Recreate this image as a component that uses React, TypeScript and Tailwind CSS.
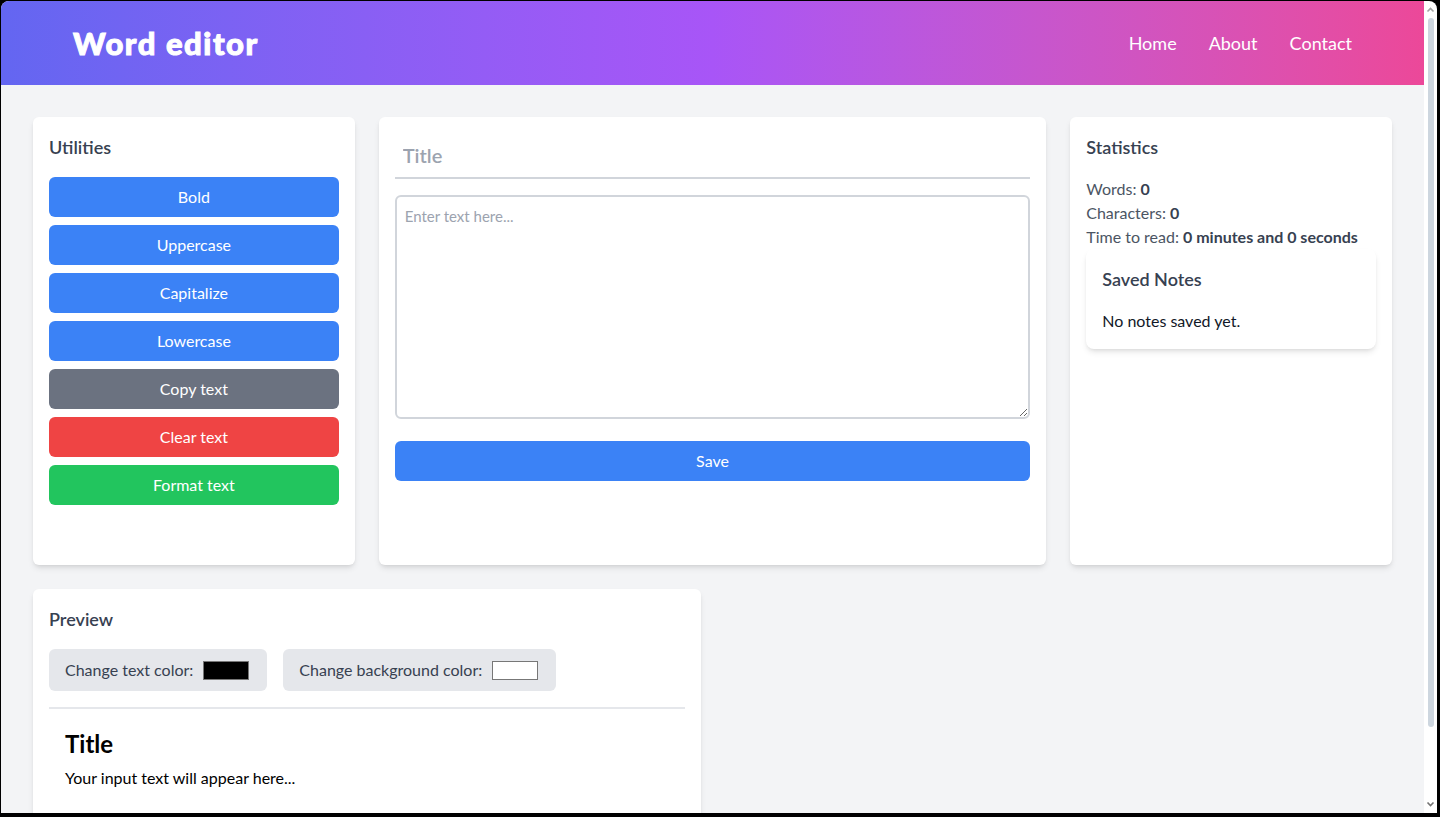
import { useState } from 'react'

const utilities = [
  { label: 'Bold', color: 'bg-[#3b82f6]' },
  { label: 'Uppercase', color: 'bg-[#3b82f6]' },
  { label: 'Capitalize', color: 'bg-[#3b82f6]' },
  { label: 'Lowercase', color: 'bg-[#3b82f6]' },
  { label: 'Copy text', color: 'bg-[#6b7280]' },
  { label: 'Clear text', color: 'bg-[#ef4444]' },
  { label: 'Format text', color: 'bg-[#22c55e]' },
]

function ScrollBar() {
  return (
    <div className="flex w-[13px] flex-col items-center bg-white py-1">
      <svg width="9" height="8" viewBox="0 0 9 8" className="mt-[1px]">
        <polyline points="1.5,5.5 4.5,2.5 7.5,5.5" fill="none" stroke="#a3a3a3" strokeWidth="1.6" />
      </svg>
      <div className="mt-[4px] h-[709px] w-[6px] rounded-full bg-[#cdd6df]" />
      <div className="flex-1" />
      <svg width="9" height="8" viewBox="0 0 9 8" className="mb-[1px]">
        <polyline points="1.5,2.5 4.5,5.5 7.5,2.5" fill="none" stroke="#737373" strokeWidth="1.6" />
      </svg>
    </div>
  )
}

export default function App() {
  const [title, setTitle] = useState('')
  const [text, setText] = useState('')
  const [textColor, setTextColor] = useState('#000000')
  const [bgColor, setBgColor] = useState('#ffffff')

  const words = text.trim() ? text.trim().split(/\s+/).length : 0
  const seconds = Math.round((words / 200) * 60)

  return (
    <div className="h-[817px] w-[1440px] bg-black pb-[4px] pl-px pr-[3px] pt-px font-['Lato',sans-serif]">
      <div className="flex h-full overflow-hidden rounded-t-lg">
        <div className="flex-1 overflow-hidden bg-[#f3f4f6]">
          <header className="flex items-center justify-between bg-linear-to-r from-[#6366f1] via-[#a855f7] to-[#ec4899] px-[72px] py-6">
            <h1 className="text-[31px] leading-9 font-black tracking-[0.05em] text-white [-webkit-text-stroke:1px_white]">
              Word editor
            </h1>
            <nav className="flex gap-8 text-lg text-white">
              <a href="#">Home</a>
              <a href="#">About</a>
              <a href="#">Contact</a>
            </nav>
          </header>

          <main className="grid grid-cols-12 gap-6 p-8">
            <section className="col-span-3 h-112 rounded-md bg-white p-4 shadow-md">
              <h2 className="mb-4 text-lg font-semibold text-[#374151]">Utilities</h2>
              <div className="flex flex-col gap-2">
                {utilities.map((u) => (
                  <button key={u.label} type="button" className={`${u.color} rounded-md py-2 text-white`}>
                    {u.label}
                  </button>
                ))}
              </div>
            </section>

            <section className="col-span-6 h-112 rounded-md bg-white p-4 shadow-md">
              <input
                type="text"
                value={title}
                onChange={(e) => setTitle(e.target.value)}
                placeholder="Title"
                className="mb-4 w-full border-b-2 border-[#d1d5db] px-2 py-2 text-xl font-semibold outline-none placeholder:text-[#9ca3af]"
              />
              <textarea
                value={text}
                onChange={(e) => setText(e.target.value)}
                placeholder="Enter text here..."
                className="block h-56 w-full rounded-md border-2 border-[#d1d5db] p-2 text-[15px] outline-none placeholder:text-[#9ca3af]"
              />
              <button type="button" className="mt-[22px] w-full rounded-md bg-[#3b82f6] py-2 text-white">
                Save
              </button>
            </section>

            <section className="col-span-3 h-112 rounded-md bg-white p-4 shadow-md">
              <h2 className="mb-4 text-lg font-semibold text-[#374151]">Statistics</h2>
              <p className="text-[#4b5563]">
                Words: <span className="font-bold text-[#374151]">{words}</span>
              </p>
              <p className="text-[#4b5563]">
                Characters: <span className="font-bold text-[#374151]">{text.length}</span>
              </p>
              <p className="text-[#4b5563]">
                Time to read:{' '}
                <span className="font-bold text-[#374151]">
                  {Math.floor(seconds / 60)} minutes and {seconds % 60} seconds
                </span>
              </p>
              <div className="rounded-lg bg-white p-4 shadow-md">
                <h3 className="mb-4 text-lg font-semibold text-[#374151]">Saved Notes</h3>
                <p className="text-[#111827]">No notes saved yet.</p>
              </div>
            </section>

            <section className="col-span-6 rounded-md bg-white p-4 shadow-md">
              <h2 className="mb-4 text-lg font-semibold text-[#374151]">Preview</h2>
              <div className="flex gap-4">
                <label className="flex h-[42px] items-center rounded-md bg-[#e5e7eb] px-4 text-[#374151]">
                  Change text color:
                  <input
                    type="color"
                    value={textColor}
                    onChange={(e) => setTextColor(e.target.value)}
                    className="ml-2"
                  />
                </label>
                <label className="flex h-[42px] items-center rounded-md bg-[#e5e7eb] px-4 text-[#374151]">
                  Change background color:
                  <input
                    type="color"
                    value={bgColor}
                    onChange={(e) => setBgColor(e.target.value)}
                    className="ml-2"
                  />
                </label>
              </div>
              <div className="mt-4 border-t-2 border-[#e5e7eb]" />
              <div className="px-4 pb-4 pt-[19px]" style={{ color: textColor, backgroundColor: bgColor }}>
                <h2 className="mb-[6px] text-2xl font-bold">{title || 'Title'}</h2>
                <p>{text || 'Your input text will appear here...'}</p>
              </div>
            </section>
          </main>
        </div>
        <ScrollBar />
      </div>
    </div>
  )
}
